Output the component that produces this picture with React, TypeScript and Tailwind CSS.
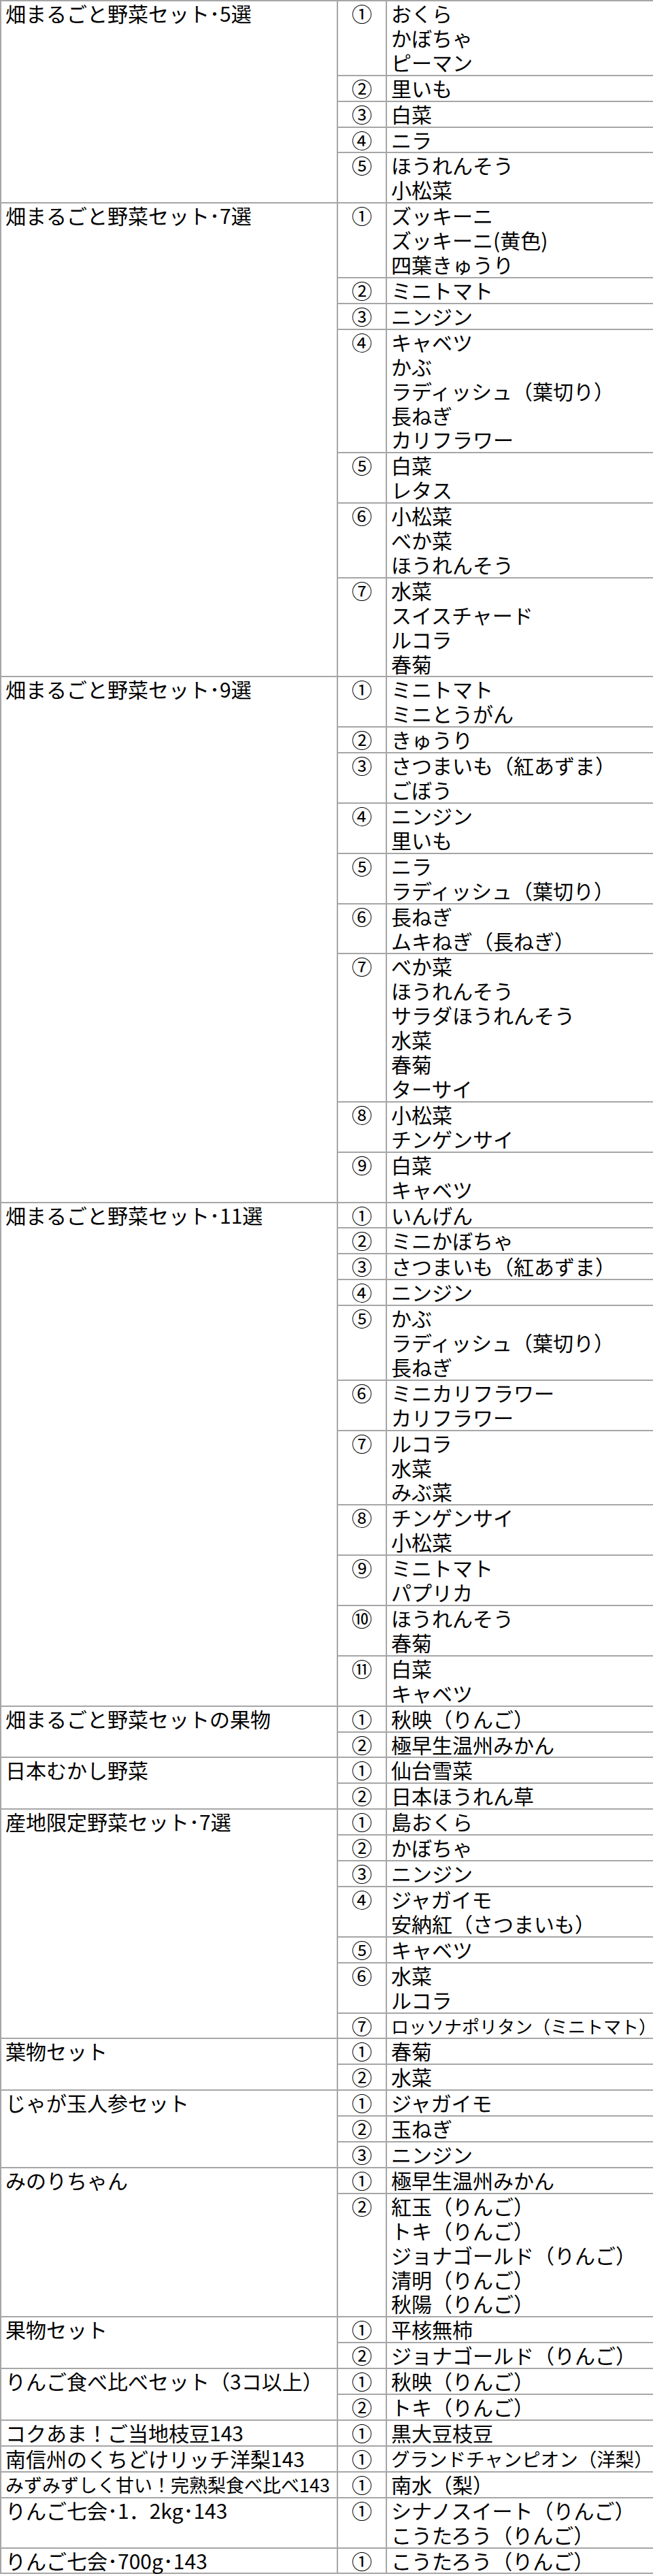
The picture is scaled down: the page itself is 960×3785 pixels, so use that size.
import React from 'react';

type SetRow = { name: string; small?: boolean; groups: string[][] };

const NUMS = ['①', '②', '③', '④', '⑤', '⑥', '⑦', '⑧', '⑨', '⑩', '⑪'];

// long texts are shrunk to fit their cell, as in the sheet
const SHRINK: Record<string, string> = {
  'グランドチャンピオン（洋梨）': 'text-[27.5px]',
  'ロッソナポリタン（ミニトマト）': 'text-[26px]',
};

const ROWS: SetRow[] = [
  {
    name: '畑まるごと野菜セット･5選',
    groups: [['おくら', 'かぼちゃ', 'ピーマン'], ['里いも'], ['白菜'], ['ニラ'], ['ほうれんそう', '小松菜']],
  },
  {
    name: '畑まるごと野菜セット･7選',
    groups: [
      ['ズッキーニ', 'ズッキーニ(黄色)', '四葉きゅうり'],
      ['ミニトマト'],
      ['ニンジン'],
      ['キャベツ', 'かぶ', 'ラディッシュ（葉切り）', '長ねぎ', 'カリフラワー'],
      ['白菜', 'レタス'],
      ['小松菜', 'べか菜', 'ほうれんそう'],
      ['水菜', 'スイスチャード', 'ルコラ', '春菊'],
    ],
  },
  {
    name: '畑まるごと野菜セット･9選',
    groups: [
      ['ミニトマト', 'ミニとうがん'],
      ['きゅうり'],
      ['さつまいも（紅あずま）', 'ごぼう'],
      ['ニンジン', '里いも'],
      ['ニラ', 'ラディッシュ（葉切り）'],
      ['長ねぎ', 'ムキねぎ（長ねぎ）'],
      ['べか菜', 'ほうれんそう', 'サラダほうれんそう', '水菜', '春菊', 'ターサイ'],
      ['小松菜', 'チンゲンサイ'],
      ['白菜', 'キャベツ'],
    ],
  },
  {
    name: '畑まるごと野菜セット･11選',
    groups: [
      ['いんげん'],
      ['ミニかぼちゃ'],
      ['さつまいも（紅あずま）'],
      ['ニンジン'],
      ['かぶ', 'ラディッシュ（葉切り）', '長ねぎ'],
      ['ミニカリフラワー', 'カリフラワー'],
      ['ルコラ', '水菜', 'みぶ菜'],
      ['チンゲンサイ', '小松菜'],
      ['ミニトマト', 'パプリカ'],
      ['ほうれんそう', '春菊'],
      ['白菜', 'キャベツ'],
    ],
  },
  { name: '畑まるごと野菜セットの果物', groups: [['秋映（りんご）'], ['極早生温州みかん']] },
  { name: '日本むかし野菜', groups: [['仙台雪菜'], ['日本ほうれん草']] },
  {
    name: '産地限定野菜セット･7選',
    groups: [
      ['島おくら'],
      ['かぼちゃ'],
      ['ニンジン'],
      ['ジャガイモ', '安納紅（さつまいも）'],
      ['キャベツ'],
      ['水菜', 'ルコラ'],
      ['ロッソナポリタン（ミニトマト）'],
    ],
  },
  { name: '葉物セット', groups: [['春菊'], ['水菜']] },
  { name: 'じゃが玉人参セット', groups: [['ジャガイモ'], ['玉ねぎ'], ['ニンジン']] },
  {
    name: 'みのりちゃん',
    groups: [
      ['極早生温州みかん'],
      ['紅玉（りんご）', 'トキ（りんご）', 'ジョナゴールド（りんご）', '清明（りんご）', '秋陽（りんご）'],
    ],
  },
  { name: '果物セット', groups: [['平核無柿'], ['ジョナゴールド（りんご）']] },
  { name: 'りんご食べ比べセット（3コ以上）', groups: [['秋映（りんご）'], ['トキ（りんご）']] },
  { name: 'コクあま！ご当地枝豆143', groups: [['黒大豆枝豆']] },
  { name: '南信州のくちどけリッチ洋梨143', groups: [['グランドチャンピオン（洋梨）']] },
  { name: 'みずみずしく甘い！完熟梨食べ比べ143', small: true, groups: [['南水（梨）']] },
  { name: 'りんご七会･1．2kg･143', groups: [['シナノスイート（りんご）', 'こうたろう（りんご）']] },
  { name: 'りんご七会･700g･143', groups: [['こうたろう（りんご）']] },
];

const cell = 'border-2 border-[#a6a6a6] align-top p-0';

export default function App() {
  return (
    <div className="w-[960px] bg-white text-black text-[30px] leading-[35.9px] font-['Noto_Sans_CJK_JP','Noto_Sans',sans-serif]">
      <table className="w-[960px] table-fixed border-collapse">
        <colgroup>
          <col className="w-[495px]" />
          <col className="w-[72px]" />
          <col className="w-[393px]" />
        </colgroup>
        <tbody>
          {ROWS.map((row) =>
            row.groups.map((items, gi) => (
              <tr key={row.name + gi}>
                {gi === 0 ? (
                  <td rowSpan={row.groups.length} className={`${cell} pl-[6px] whitespace-nowrap`}>
                    <div className={row.small ? 'text-[27px]' : ''}>{row.name}</div>
                  </td>
                ) : null}
                <td className={`${cell} text-center`}>{NUMS[gi]}</td>
                <td className={`${cell} pl-[6px] whitespace-nowrap`}>
                  {items.map((it) => (
                    <div key={it} className={SHRINK[it] ?? ''}>
                      {it}
                    </div>
                  ))}
                </td>
              </tr>
            ))
          )}
        </tbody>
      </table>
    </div>
  );
}
